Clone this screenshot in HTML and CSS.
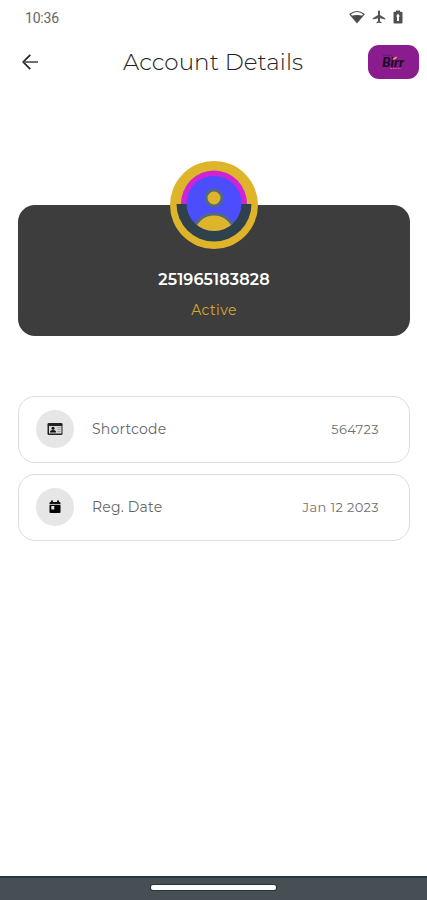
FILE: index.html
```html
<!DOCTYPE html>
<html lang="en">
<head>
    <meta charset="UTF-8">
    <meta name="viewport" content="width=device-width, initial-scale=1.0">
    <title>Account Details</title>
    <link rel="stylesheet" href="styles.css">
</head>
<body>
    <div class="screen">
        <div class="status-bar">
            <span class="time">10:36</span>
            <div class="status-icons">
                <svg width="16" height="14" viewBox="0 0 16 14">
                    <path d="M1 4.2C5 .6 11 .6 15 4.2L8 12.6z" fill="#fff" stroke="#555" stroke-width="1.2"/>
                    <path d="M2.5 5.8C6 4.6 10 4.6 13.5 5.8L8 12.6z" fill="#484848"/>
                </svg>
                <svg width="14" height="14" viewBox="0 0 14 14">
                    <path d="M7 .5c-.7 0-1 .6-1 1.200V5L.8 8.300v1.300L6 8.200v3L4.500 12.300v1L7 12.700l2.500.6v-1L8 11.200v-3l5.200 1.400V8.300L8 5V1.700C8 1.100 7.700.5 7 .5z" fill="#555"/>
                </svg>
                <svg width="10" height="14" viewBox="0 0 10 14">
                    <path d="M3 .5h4v1.300h1.500q1 0 1 1v9.700q0 1-1 1h-7q-1 0-1-1V2.800q0-1 1-1H3z" fill="#505050"/>
                    <path d="M5 3.500L7 6.500H6V11H4V6.500H3z" fill="#fff"/>
                </svg>
            </div>
        </div>

        <div class="header">
            <svg class="back" width="18" height="18" viewBox="0 0 18 18" fill="none" stroke="#222" stroke-width="1.7">
                <path d="M9.300 1.800L2.200 9l7.100 7.200"/>
                <path d="M2.500 9H17" stroke="#555"/>
            </svg>
            <h1 class="title">Account Details</h1>
            <div class="logo">
                <svg width="51" height="34" viewBox="0 0 51 34">
                    <path d="M15 10.500Q20 9 24 11" fill="none" stroke="#681477"/>
                    <text class="logo-text" x="14" y="22" textLength="22" lengthAdjust="spacingAndGlyphs">Birr</text>
                    <path d="M24.500 14.500q1-3 4.800-2.800q-.8 3-4.800 2.800z" fill="#f29a5c"/>
                    <path d="M22 23.500H33" stroke="#c85a8c" stroke-dasharray="2 .6"/>
                </svg>
            </div>
        </div>

        <div class="card">
            <svg class="avatar" width="88" height="88" viewBox="0 0 88 88">
                <defs>
                    <clipPath id="face"><circle cx="44" cy="42.500" r="27.500"/></clipPath>
                </defs>
                <circle cx="44" cy="44" r="44" fill="#deb42b"/>
                <path d="M11 43a33 33.500 0 0 1 66 0z" fill="#cc24d6"/>
                <path d="M6.500 43a37.500 37.500 0 0 0 75 0z" fill="#2f414a"/>
                <circle cx="44" cy="42.500" r="27.500" fill="#4b4dff"/>
                <g clip-path="url(#face)" fill="#deb42b" stroke="#536980" stroke-width="3">
                    <circle cx="44" cy="37" r="8"/>
                    <ellipse cx="44" cy="71" rx="20" ry="18"/>
                </g>
            </svg>
            <div class="number">251965183828</div>
            <div class="status">Active</div>
        </div>

        <div class="details">
            <div class="row">
                <div class="icon">
                    <svg width="16" height="14" viewBox="0 0 16 14">
                        <rect x=".5" y="1" width="15" height="12" rx="1.300" fill="#222"/>
                        <rect x="2" y="4" width="12.500" height="7.500" fill="#d8d8d8"/>
                        <circle cx="6" cy="6.200" r="1.500" fill="#111"/>
                        <path d="M3 10.500q0-2.400 3-2.400t3 2.400z" fill="#111"/>
                        <path d="M10.500 5.500h3M10.500 7.500h3M10.500 9.500h3" stroke="#999" stroke-width=".8"/>
                    </svg>
                </div>
                <span class="label">Shortcode</span>
                <span class="value">564723</span>
            </div>
            <div class="row">
                <div class="icon">
                    <svg width="12" height="14" viewBox="0 0 12 14">
                        <path d="M1.500 2H2V.5h2V2h4V.5h2V2h.5q1 0 1 1v1.200H.5V3q0-1 1-1z" fill="#111"/>
                        <path d="M.5 5h11v7q0 1-1 1h-9q-1 0-1-1z" fill="#000"/>
                        <rect x="2.300" y="6" width="3" height="3.500" fill="#e6e6e6"/>
                    </svg>
                </div>
                <span class="label">Reg. Date</span>
                <span class="value">Jan 12 2023</span>
            </div>
        </div>

        <div class="nav-bar">
            <div class="nav-handle"></div>
        </div>
    </div>
</body>
</html>
```
FILE: styles.css
```css
* {
    box-sizing: border-box;
}
body {
    margin: 0;
    background: #fff;
    font-family: Montserrat, Inter, "Open Sans", sans-serif;
}
.screen {
    height: 100vh;
    display: flex;
    flex-direction: column;
}
.status-bar {
    height: 36px;
    padding: 0 23px 0 25px;
    display: flex;
    align-items: center;
    justify-content: space-between;
}
.time {
    font-family: Roboto, sans-serif;
    font-size: 14px;
    letter-spacing: -0.2px;
    color: #666;
}
.status-icons {
    display: flex;
    align-items: center;
    gap: 7px;
    margin: -3px 1px 0 0;
}
.header {
    height: 52px;
    padding: 0 8px 0 21px;
    display: flex;
    align-items: center;
}
.title {
    flex: 1;
    margin: 0;
    padding-left: 84px;
    font-size: 23px;
    font-weight: 300;
    letter-spacing: 0.05px;
    white-space: nowrap;
    color: #222;
}
.logo {
    width: 51px;
    height: 34px;
    border-radius: 11px;
    background: #8b1c8f;
}
.logo-text {
    font-family: Lato, sans-serif;
    font-size: 13px;
    font-weight: 900;
    font-style: italic;
    fill: #1c0b22;
}
.card {
    height: 131px;
    margin: 117px 17px 0 18px;
    border-radius: 17px;
    background: #3d3d3d;
    display: flex;
    flex-direction: column;
    align-items: center;
}
.avatar {
    flex: none;
    margin-top: -44px;
}
.number {
    margin-top: 21px;
    font-size: 16px;
    font-weight: 600;
    line-height: 20px;
    letter-spacing: 0.1px;
    color: #fff;
}
.status {
    margin-top: 11px;
    font-size: 14px;
    line-height: 18px;
    letter-spacing: 0.4px;
    color: #d9a92c;
}
.details {
    margin: 60px 17px 0 18px;
    display: flex;
    flex-direction: column;
    gap: 11px;
}
.row {
    height: 67px;
    padding: 0 30px 1px 17px;
    border: 1px solid #dedede;
    border-radius: 17px;
    display: flex;
    align-items: center;
}
.icon {
    width: 38px;
    height: 38px;
    margin-right: 18px;
    border-radius: 50%;
    background: #e6e6e6;
    display: flex;
    align-items: center;
    justify-content: center;
}
.label {
    flex: 1;
    font-size: 14px;
    letter-spacing: 0.2px;
    color: #666;
}
.value {
    font-size: 13px;
    letter-spacing: 0.35px;
    color: #707070;
}
.nav-bar {
    height: 24px;
    margin-top: auto;
    border-top: 2px solid #263940;
    background: #454f54;
    display: flex;
    justify-content: center;
    padding-top: 7px;
}
.nav-handle {
    width: 125px;
    height: 5px;
    border-radius: 2px;
    background: #fff;
    box-shadow: 0 0 0 1px #23363e;
}
```
